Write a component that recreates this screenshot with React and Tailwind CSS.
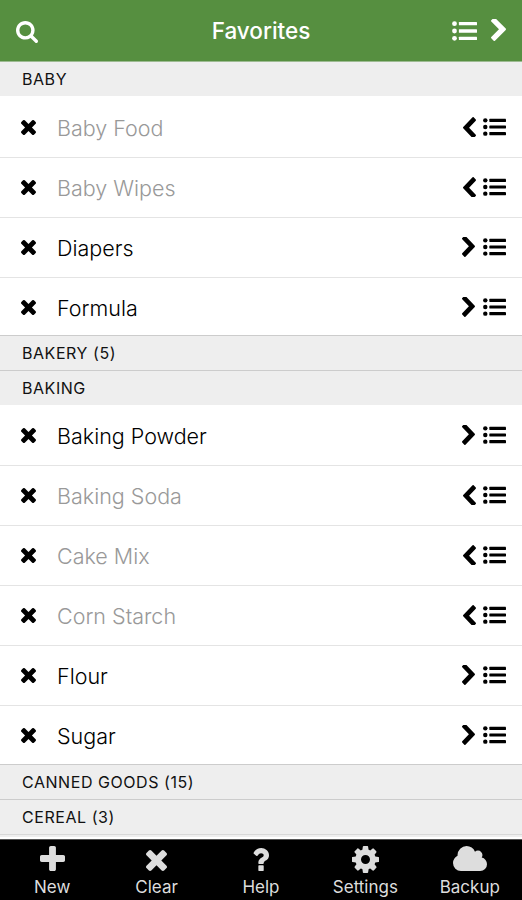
import React from "react";

const groups = [
  {
    name: "BABY",
    items: [
      { name: "Baby Food", listed: true },
      { name: "Baby Wipes", listed: true },
      { name: "Diapers" },
      { name: "Formula" },
    ],
  },
  { name: "BAKERY (5)", items: [] },
  {
    name: "BAKING",
    items: [
      { name: "Baking Powder" },
      { name: "Baking Soda", listed: true },
      { name: "Cake Mix", listed: true },
      { name: "Corn Starch", listed: true },
      { name: "Flour" },
      { name: "Sugar" },
    ],
  },
  { name: "CANNED GOODS (15)", items: [] },
  { name: "CEREAL (3)", items: [] },
];

function Icon({ box, d, className }) {
  return (
    <svg viewBox={box} preserveAspectRatio="none" fill="currentColor" className={className}>
      <path d={d} />
    </svg>
  );
}

const SearchIcon = ({ className }) => (
  <Icon className={className} box="64 128 1664 1664" d="M1216 832q0-185-131.5-316.5t-316.5-131.5-316.5 131.5-131.5 316.5 131.5 316.5 316.5 131.5 316.5-131.5 131.5-316.5zm512 832q0 52-38 90t-90 38q-54 0-90-38l-343-342q-179 124-399 124-143 0-273.5-55.5t-225-150-150-225-55.5-273.5 55.5-273.5 150-225 225-150 273.5-55.5 273.5 55.5 225 150 150 225 55.5 273.5q0 220-124 399l343 343q37 37 37 90z" />
);

const TimesIcon = ({ className }) => (
  <Icon className={className} box="302 366 1188 1188" d="M1490 1322q0 40-28 68l-136 136q-28 28-68 28t-68-28l-294-294-294 294q-28 28-68 28t-68-28l-136-136q-28-28-28-68t28-68l294-294-294-294q-28-28-28-68t28-68l136-136q28-28 68-28t68 28l294 294 294-294q28-28 68-28t68 28l136 136q28 28 28 68t-28 68l-294 294 294 294q28 28 28 68z" />
);

const PlusIcon = ({ className }) => (
  <Icon className={className} box="192 128 1408 1408" d="M1600 736v192q0 40-28 68t-68 28h-416v416q0 40-28 68t-68 28h-192q-40 0-68-28t-28-68v-416h-416q-40 0-68-28t-28-68v-192q0-40 28-68t68-28h416v-416q0-40 28-68t68-28h192q40 0 68 28t28 68v416h416q40 0 68 28t28 68z" />
);

const QuestionIcon = ({ className }) => (
  <Icon className={className} box="448 256 956 1280" d="M1088 1256v240q0 16-12 28t-28 12h-240q-16 0-28-12t-12-28v-240q0-16 12-28t28-12h240q16 0 28 12t12 28zm316-600q0 54-15.5 101t-35 76.5-55 59.5-57.5 43.5-61 35.5q-41 23-68.5 65t-27.5 67q0 17-12 32.5t-28 15.5h-240q-15 0-25.5-18.5t-10.5-37.5v-45q0-83 65-156.5t143-108.5q59-27 84-56t25-76q0-42-46.5-74t-107.5-32q-65 0-108 29-35 25-107 115-13 16-31 16-12 0-25-8l-164-125q-13-10-15.5-25t5.5-28q160-266 464-266 80 0 161 31t146 83 106 127.5 41 158.5z" />
);

const CogIcon = ({ className }) => (
  <Icon className={className} box="128 128 1536 1536" d="M1152 896q0-106-75-181t-181-75-181 75-75 181 75 181 181 75 181-75 75-181zm512-109v222q0 12-8 23t-20 13l-185 28q-19 54-39 91 35 50 107 138 10 12 10 25t-9 23q-27 37-99 108t-94 71q-12 0-26-9l-138-108q-44 23-91 38-16 136-29 186-7 28-36 28h-222q-14 0-24.5-8.5t-11.5-21.5l-28-184q-49-16-90-37l-141 107q-10 9-25 9-14 0-25-11-126-114-165-168-7-10-7-23 0-12 8-23 15-21 51-66.5t54-70.5q-27-50-41-99l-183-27q-13-2-21-12.5t-8-23.5v-222q0-12 8-23t19-13l186-28q14-46 39-92-40-57-107-138-10-12-10-24 0-10 9-23 26-36 98.5-107.5t94.5-71.5q13 0 26 10l138 107q44-23 91-38 16-136 29-186 7-28 36-28h222q14 0 24.5 8.5t11.5 21.5l28 184q49 16 90 37l142-107q9-9 24-9 13 0 25 10 129 119 165 170 7 8 7 22 0 12-8 23-15 21-51 66.5t-54 70.5q26 50 41 98l183 28q13 2 21 12.5t8 23.5z" />
);

const CloudIcon = ({ className }) => (
  <Icon className={className} box="64 128 1920 1408" d="M1984 1152q0 159-112.5 271.5t-271.5 112.5h-1088q-185 0-316.5-131.5t-131.5-316.5q0-132 71-241.5t187-163.5q-2-28-2-43 0-212 150-362t362-150q158 0 286.5 88t187.5 230q70-62 166-62 106 0 181 75t75 181q0 75-41 138 129 30 213 134.5t84 239.5z" />
);

const ChevronIcon = ({ className }) => (
  <Icon className={className} box="346 126 1036 1512" d="M1363 877l-742 742q-19 19-45 19t-45-19l-166-166q-19-19-19-45t19-45l531-531-531-531q-19-19-19-45t19-45l166-166q19-19 45-19t45 19l742 742q19 19 19 45t-19 45z" />
);

function ListIcon({ className }) {
  return (
    <svg viewBox="0 0 24 19" preserveAspectRatio="none" fill="currentColor" className={className}>
      {[2.5, 9.5, 16.5].map(y => (
        <g key={y}>
          <circle cx="2.4" cy={y} r="2.3" />
          <rect x="6.6" y={y - 1.6} width="17.4" height="3.2" rx="0.5" />
        </g>
      ))}
    </svg>
  );
}

const tabs = [
  { label: "New", icon: <PlusIcon className="size-[25px]" /> },
  { label: "Clear", icon: <TimesIcon className="size-[21px] mt-[4px]" /> },
  { label: "Help", icon: <QuestionIcon className="w-[16px] h-[23px] mt-0.5" /> },
  { label: "Settings", icon: <CogIcon className="size-[27px]" /> },
  { label: "Backup", icon: <CloudIcon className="w-[34px] h-[25px]" /> },
];

function Row({ item, last }) {
  return (
    <div className={last ? "h-[58px]" : "h-[60px] border-b border-[#e4e4e4]"}>
      <div className="h-[59px] pl-[21px] pr-4 flex items-center">
        <TimesIcon className="size-[15px]" />
        <span className={`ml-[21px] pt-0.5 flex-1 text-[21.5px] font-light leading-none ${item.listed ? "text-[#999]" : "text-black"}`}>{item.name}</span>
        <ChevronIcon className={item.listed ? "w-[13px] h-[20px] mb-0.5 mr-[7px] rotate-180" : "w-[13px] h-[20px] mb-0.5 mr-2"} />
        <ListIcon className="w-[23px] h-[18px] mb-0.5" />
      </div>
    </div>
  );
}

export default function App() {
  return (
    <div className="w-[522px] h-[900px] overflow-hidden flex flex-col bg-white text-black font-['Inter',sans-serif]">
      <header className="h-[62px] shrink-0 px-4 grid grid-cols-[1fr_auto_1fr] items-center bg-[#568f40] text-white border-b border-[#9dbb92]">
        <SearchIcon className="size-[22px] mt-0.5" />
        <h1 className="pt-0.5 text-[22.5px] font-medium leading-none">Favorites</h1>
        <div className="flex items-center justify-end gap-3.5">
          <ListIcon className="w-[25px] h-[20px]" />
          <ChevronIcon className="w-[15px] h-[22px] mb-0.5" />
        </div>
      </header>
      <main className="flex-1 min-h-0 overflow-hidden">
        {groups.map((g, i) => (
          <section key={g.name}>
            <h2 className={`px-[22px] flex items-center bg-[#eee] text-[16px] leading-none tracking-[0.55px] text-[#111] ${i ? "h-[35px] border-t border-[#ccc]" : "h-[34px]"}`}>{g.name}</h2>
            {g.items.length > 0 && (
              <div className={i ? "pt-px" : "pt-0.5 -mb-px"}>
                {g.items.map((item, n) => <Row key={item.name} item={item} last={n === g.items.length - 1} />)}
              </div>
            )}
          </section>
        ))}
        <div className="h-[3px] bg-[#eee] border-t border-[#d8d8d8]" />
      </main>
      <nav className="h-[61px] shrink-0 grid grid-cols-5 bg-black text-[#ddd] border-t border-[#555]">
        {tabs.map(t => (
          <div key={t.label} className="flex flex-col items-center">
            <div className="h-[39px] pt-[6px]">{t.icon}</div>
            <span className="text-[17px] leading-none">{t.label}</span>
          </div>
        ))}
      </nav>
    </div>
  );
}
